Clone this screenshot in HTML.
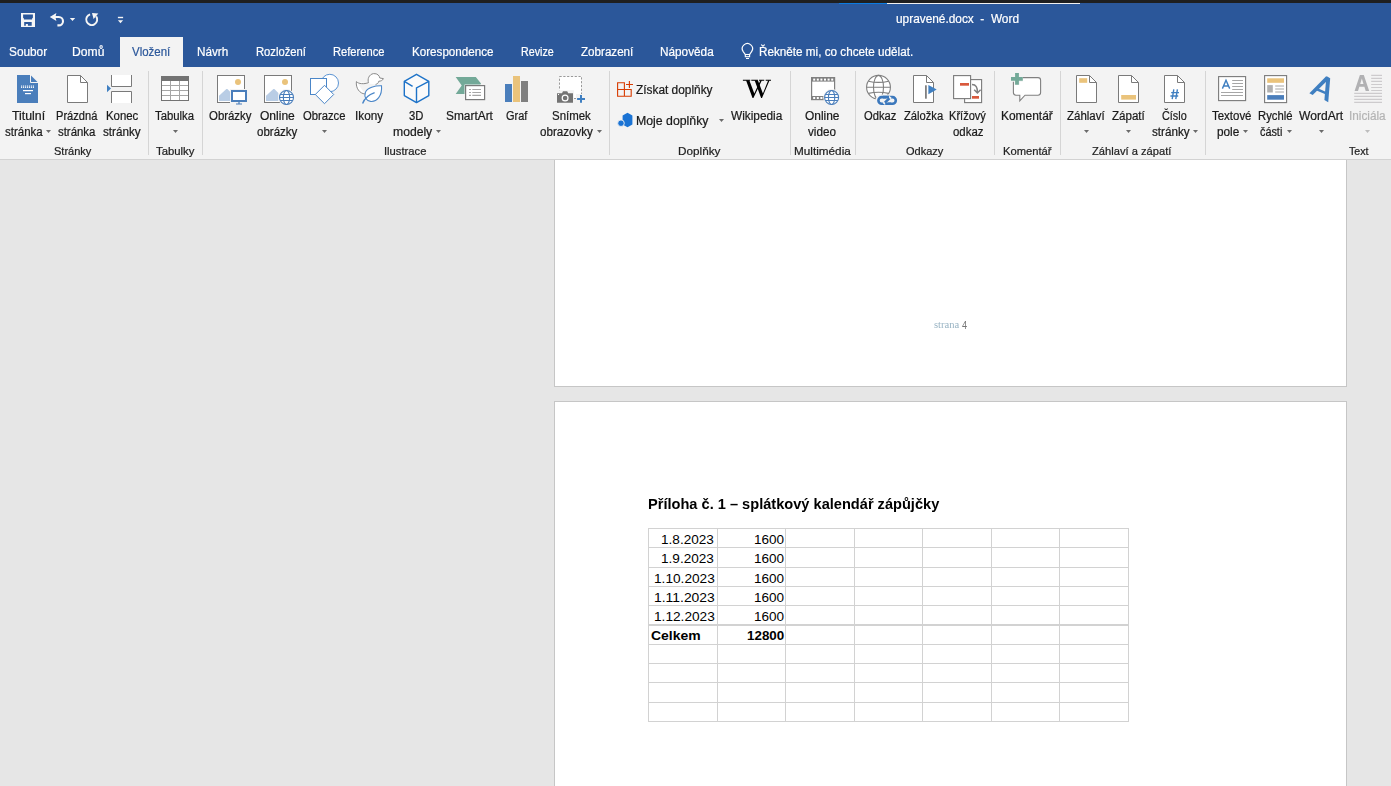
<!DOCTYPE html>
<html lang="cs"><head><meta charset="utf-8"><title>upravené.docx - Word</title>
<style>
html,body{margin:0;padding:0;}
body{width:1391px;height:786px;overflow:hidden;background:#e6e6e6;font-family:"Liberation Sans", sans-serif;position:relative}
.t{position:absolute;white-space:pre;line-height:0;transform-origin:0 50%;display:block}
.txt{position:absolute;left:0;top:0;width:100%;height:100%;will-change:transform}
#ribbon .t,#tabs .t,#titlebar .t{-webkit-text-stroke:0.22px currentColor}
#topstrip{position:absolute;left:0;top:0;width:1391px;height:3px;background:#1f1f1f}
#titlebar{position:absolute;left:0;top:0;width:1391px;height:37px;background:#2b579a}
#tabs{position:absolute;left:0;top:37px;width:1391px;height:30px;background:#2b579a}
#tab-active{position:absolute;left:120px;top:0;width:63px;height:30px;background:#f3f3f3}
#ribbon{position:absolute;left:0;top:67px;width:1391px;height:92px;background:#f3f3f3;border-bottom:1px solid #d2d2d2}
.sep{position:absolute;top:4px;width:1px;height:84px;background:#d5d5d5}
#doc{position:absolute;left:0;top:160px;width:1391px;height:626px;background:#e6e6e6;overflow:hidden}
.page{position:absolute;left:554px;width:791px;background:#fff;border:1px solid #c6c6c6}
svg{position:absolute;overflow:visible}
.arr{position:absolute;width:0;height:0;border-left:2.5px solid transparent;border-right:2.5px solid transparent;border-top:3px solid #777}
.xltxt{position:absolute;left:0;top:0;width:100%;height:100%}
</style></head>
<body>
<div id="titlebar">
<div id="topstrip"></div>
<div style="position:absolute;left:839px;top:3px;width:48px;height:1px;background:#0c7be0"></div>
<div style="position:absolute;left:887px;top:3px;width:193px;height:1px;background:#f0f0f0"></div>
<svg style="left:20px;top:12px" width="16" height="16" viewBox="20 12 16 16"><path fill-rule="evenodd" fill="#f6f6f6" d="M21,13 H35 V27 H21 Z M23.1,14.4 V17.8 L23.9,18.6 V19.6 H32.1 V18.6 L32.9,17.8 V14.4 Z M24.2,22 V25.8 H25.8 V24 H27.9 V25.8 H31.7 V22 Z"/></svg>
<svg style="left:48px;top:11px" width="18" height="17" viewBox="48 11 18 17"><path d="M56.4,12.9 L49.8,16.9 L56.4,20.9 L55.4,16.9 Z" fill="#f6f6f6"/><path d="M54,17 H58.8 A4.2,4.2 0 0 1 58.8,25.4 H57.4" fill="none" stroke="#f6f6f6" stroke-width="2.1"/></svg>
<svg style="left:69px;top:17px" width="7" height="5" viewBox="69 17 7 5"><path d="M69.8,17.9 H75.2 L72.5,21.1 Z" fill="#f6f6f6"/></svg>
<svg style="left:83px;top:11px" width="18" height="17" viewBox="83 11 18 17"><path d="M90.1,14.3 A5.5,5.5 0 1 0 96.2,16.4" fill="none" stroke="#f6f6f6" stroke-width="1.9"/><path d="M92,13 L98.3,13.4 L93.6,19 Z" fill="#f6f6f6"/></svg>
<svg style="left:116px;top:16px" width="9" height="9" viewBox="116 16 9 9"><rect x="117.9" y="16.8" width="5.2" height="1.4" fill="#f6f6f6"/><path d="M117.9,20.3 H123.1 L120.5,23.2 Z" fill="#f6f6f6"/></svg>

<div class="txt"><span class="t" style="left:896.00px;top:18.50px;font-size:13px;color:#ffffff;transform:scaleX(0.9118)">upravené.docx  -  Word</span></div>
</div>
<div id="tabs">
<div id="tab-active"></div>
<svg style="left:740px;top:5px" width="15" height="19" viewBox="740 42 15 19"><path d="M745.3,54.5 L743.2,51.6 A5.1,5.1 0 1 1 751.6,51.6 L749.6,54.5" fill="none" stroke="#fff" stroke-width="1.2"/><rect x="745.3" y="54.5" width="4.3" height="2.2" fill="none" stroke="#fff" stroke-width="1.1"/><path d="M746,58.5 H749" stroke="#fff" stroke-width="1"/></svg>

<div class="txt"><span class="t" style="left:8.50px;top:14.67px;font-size:12.5px;color:#ffffff;transform:scaleX(0.9451)">Soubor</span>
<span class="t" style="left:71.90px;top:14.67px;font-size:12.5px;color:#ffffff;transform:scaleX(0.9717)">Domů</span>
<span class="t" style="left:196.80px;top:14.67px;font-size:12.5px;color:#ffffff;transform:scaleX(0.9387)">Návrh</span>
<span class="t" style="left:256.00px;top:14.67px;font-size:12.5px;color:#ffffff;transform:scaleX(0.8994)">Rozložení</span>
<span class="t" style="left:333.00px;top:14.67px;font-size:12.5px;color:#ffffff;transform:scaleX(0.8927)">Reference</span>
<span class="t" style="left:412.00px;top:14.67px;font-size:12.5px;color:#ffffff;transform:scaleX(0.9306)">Korespondence</span>
<span class="t" style="left:520.80px;top:14.67px;font-size:12.5px;color:#ffffff;transform:scaleX(0.8556)">Revize</span>
<span class="t" style="left:580.50px;top:14.67px;font-size:12.5px;color:#ffffff;transform:scaleX(0.9293)">Zobrazení</span>
<span class="t" style="left:659.80px;top:14.67px;font-size:12.5px;color:#ffffff;transform:scaleX(0.9421)">Nápověda</span>
<span class="t" style="left:759.00px;top:14.67px;font-size:12.5px;color:#ffffff;transform:scaleX(0.9363)">Řekněte mi, co chcete udělat.</span>
<span class="t" style="left:131.60px;top:14.67px;font-size:12.5px;color:#2b579a;transform:scaleX(0.9184)">Vložení</span></div>
</div>
<div id="ribbon">
<div class="sep" style="left:148px"></div><div class="sep" style="left:202px"></div><div class="sep" style="left:609px"></div><div class="sep" style="left:790px"></div><div class="sep" style="left:855px"></div><div class="sep" style="left:994px"></div><div class="sep" style="left:1060px"></div><div class="sep" style="left:1205px"></div>
<svg style="left:16px;top:7px" width="24" height="31" viewBox="16 74 24 31"><path d="M17,75 H30.5 L38,82.5 V103 H17 Z" fill="#4a7ebb"/><path d="M30.5,75 V82.5 H38" fill="none" stroke="#f3f3f3" stroke-width="1"/><path d="M21,86 H34 M21,87.4 H34" stroke="#fff" stroke-width="1.1" stroke-dasharray="1.2 0.8" opacity=".9"/><rect x="23" y="90" width="10" height="1.2" fill="#fff"/><rect x="25" y="93" width="6" height="1.2" fill="#fff"/></svg>
<svg style="left:66px;top:7px" width="24" height="31" viewBox="66 74 24 31"><path d="M67.5,75.5 H80.5 L87.5,82.5 V102.5 H67.5 Z" fill="#fff" stroke="#7a7a7a" stroke-width="1"/><path d="M80.5,75.5 V82.5 H87.5" fill="none" stroke="#7a7a7a" stroke-width="1"/></svg>
<svg style="left:106px;top:7px" width="28" height="31" viewBox="106 74 28 31"><path d="M111.5,75 V86.5 H131.5 V75" fill="#fff" stroke="#7a7a7a"/><path d="M111.5,103 V91.5 H131.5 V103" fill="#fff" stroke="#7a7a7a"/><path d="M107,84.8 L111,88.5 L107,92.2 Z" fill="#3f7fc1"/></svg>
<svg style="left:160px;top:8px" width="30" height="28" viewBox="160 75 30 28"><rect x="161.5" y="76.5" width="27" height="24" fill="#fff" stroke="#737373"/><rect x="161" y="76" width="28" height="5" fill="#737373"/><path d="M170.5,81 V100 M179.5,81 V100 M162,85.5 H188 M162,90.5 H188 M162,95.5 H188" stroke="#a6a6a6" stroke-width="1"/></svg>
<svg style="left:216px;top:7px" width="33" height="32" viewBox="216 74 33 32"><rect x="217.5" y="75.5" width="27" height="27" fill="#fff" stroke="#7a7a7a"/><circle cx="238" cy="82" r="3" fill="#eac37b"/><path d="M219,101 V95.8 L226.4,89 H227.4 L231.4,93 V101 Z" fill="#b9cde5"/><rect x="230" y="89" width="18" height="14" fill="#f3f3f3"/><rect x="232" y="91" width="14" height="10" fill="#fff" stroke="#4a7ebb" stroke-width="2"/><path d="M236,104 H242 M239,102 V104" stroke="#4a7ebb" stroke-width="1.2"/></svg>
<svg style="left:263px;top:7px" width="33" height="32" viewBox="263 74 33 32"><rect x="264.5" y="75.5" width="27" height="27" fill="#fff" stroke="#7a7a7a"/><circle cx="285" cy="82" r="3" fill="#eac37b"/><path d="M266,101 V95.8 L273.4,89 H274.4 L278.4,93 V101 Z" fill="#b9cde5"/><circle cx="286.5" cy="97.5" r="8.4" fill="#f3f3f3"/><circle cx="286.5" cy="97.5" r="7" fill="#fff" stroke="#4a7ebb" stroke-width="1.1"/><ellipse cx="286.5" cy="97.5" rx="3.15" ry="7" fill="none" stroke="#4a7ebb" stroke-width="1.1"/><path d="M279.5,97.5 H293.5 M280.2,94.49 H292.8 M280.2,100.51 H292.8" stroke="#4a7ebb" stroke-width="1.1" fill="none"/></svg>
<svg style="left:309px;top:5px" width="32" height="33" viewBox="309 72 32 33"><circle cx="329.8" cy="83" r="8.7" fill="#fff" stroke="#5b94d3" stroke-width="1"/><rect x="310.5" y="78.5" width="16" height="16" fill="#fff" stroke="#4a86c8" stroke-width="1"/><path d="M324.5,85.3 L333.7,94.5 L324.5,103.7 L315.3,94.5 Z" fill="#fff" stroke="#4a86c8" stroke-width="1"/></svg>
<svg style="left:354px;top:5px" width="32" height="33" viewBox="354 72 32 33"><path d="M356.4,81.6 C358.5,83.8 364,84.5 368.6,82.6 C367.2,79.5 368.8,74.3 373.6,73.6 C377.5,73.2 379.6,76 379.8,78 L383.4,78.6 C382.6,80.6 380.6,81.2 378.8,81.2 C378.6,83 377.2,84 375.6,84.4 M365,94 C359.5,93.5 355.6,88 356.4,81.6" fill="#fff" stroke="#8a8a8a" stroke-width="1"/><path d="M381.5,85.8 C375,85.6 367.2,87.6 365.4,92.4 C363.8,97.2 366.4,100.8 370.6,101.4 C376.8,102 382.4,96 381.5,85.8 Z" fill="#fff" stroke="#4a86c8" stroke-width="1.1"/><path d="M362.6,103.6 C364.4,98.6 368.6,94.6 374.6,92.6" fill="none" stroke="#4a86c8" stroke-width="1.4"/></svg>
<svg style="left:402px;top:5px" width="30" height="33" viewBox="402 72 30 33"><path d="M416.5,74.3 L428.8,81.3 V95.6 L416.5,102.6 L404.3,95.6 V81.3 Z" fill="#fafafa" stroke="#1e73c8" stroke-width="1.4" stroke-linejoin="round"/><path d="M404.3,81.3 L412.6,86.3 M428.8,81.3 L416.5,88 V102.6" fill="none" stroke="#1e73c8" stroke-width="1.4"/></svg>
<svg style="left:454px;top:8px" width="33" height="27" viewBox="454 75 33 27"><path d="M455.7,77.1 H475.8 L481,83.5 L475.8,94 H455.7 L461.7,85.6 Z" fill="#73a998"/><rect x="464.5" y="84.5" width="21" height="16" fill="#f3f3f3"/><rect x="465.6" y="85.6" width="19" height="14" fill="#fff" stroke="#7a7a7a" stroke-width="1.2"/><path d="M469,89.5 H471 M472.3,89.5 H481 M469,92.5 H471 M472.3,92.5 H481 M469,95.4 H471 M472.3,95.4 H481" stroke="#a6a6a6" stroke-width="1.1"/></svg>
<svg style="left:504px;top:8px" width="26" height="28" viewBox="504 75 26 28"><rect x="505" y="84" width="7" height="18" fill="#4a7ebb"/><rect x="513" y="76" width="7" height="26" fill="#eac37b"/><rect x="521" y="81" width="7" height="21" fill="#7f7f7f"/></svg>
<svg style="left:556px;top:8px" width="30" height="29" viewBox="556 75 30 29"><rect x="559.5" y="76.5" width="22" height="22" fill="#fff" stroke="#9a9a9a" stroke-dasharray="2.2 1.6"/><rect x="576" y="94" width="10" height="10" fill="#f3f3f3"/><rect x="556" y="90.2" width="18" height="13.6" fill="#f3f3f3"/><path d="M557,93.2 H562 L563,91.3 H567.2 L568.2,93.2 H573 V102.8 H557 Z" fill="#737373"/><circle cx="565.1" cy="98" r="2.9" fill="none" stroke="#fff" stroke-width="1.2"/><rect x="558" y="94" width="1" height="1" fill="#fff"/><path d="M581,95 V102.8 M577.1,98.9 H585" stroke="#3f7fc1" stroke-width="2"/></svg>
<svg style="left:616px;top:13px" width="18" height="18" viewBox="616 80 18 18"><path d="M617.6,82.8 H624.4 V96.3 H617.6 Z M617.6,89.5 H631.2 V96.3 H624.4 V89.5" fill="none" stroke="#d83b01" stroke-width="1.1"/><path d="M629.4,81 V88 M626,84.5 H633" stroke="#d83b01" stroke-width="1.1"/></svg>
<svg style="left:617px;top:45px" width="17" height="16" viewBox="617 112 17 16"><path d="M627.5,112.8 L632.4,115.6 V124.4 L627.5,127.2 L622.6,124.4 V115.6 Z" fill="#1a73d4"/><circle cx="621" cy="123.2" r="3.3" fill="#1a73d4" stroke="#f3f3f3" stroke-width=".9"/></svg>
<svg style="left:742px;top:12px" width="30" height="20" viewBox="742 79 30 20"><path d="M746,80.3 H749.3 L754.3,93.4 L760.4,80.3 H761.9 L753.4,97.9 H752.5 Z" fill="#000"/><path d="M754.6,80.3 H757.9 L762.9,93.4 L768.2,80.3 H769.6 L762,97.9 H761.1 Z" fill="#000"/><path d="M742.9,80.2 H750.2 M751.3,80.2 H757.9 M759,80.2 H764.2 M765.7,80.2 H771" stroke="#000" stroke-width="1.1"/></svg>
<svg style="left:810px;top:9px" width="31" height="30" viewBox="810 76 31 30"><rect x="811.6" y="77.6" width="23" height="22" fill="#fff" stroke="#808080" stroke-width="1.2"/><rect x="811.6" y="77.6" width="23" height="4" fill="#808080"/><rect x="811.6" y="96" width="23" height="3.6" fill="#808080"/><rect x="813.2" y="78.6" width="2" height="2" fill="#fff"/><rect x="816.8000000000001" y="78.6" width="2" height="2" fill="#fff"/><rect x="820.4000000000001" y="78.6" width="2" height="2" fill="#fff"/><rect x="824.0" y="78.6" width="2" height="2" fill="#fff"/><rect x="827.6" y="78.6" width="2" height="2" fill="#fff"/><rect x="831.2" y="78.6" width="2" height="2" fill="#fff"/><rect x="813.2" y="97" width="2" height="2" fill="#fff"/><rect x="816.8000000000001" y="97" width="2" height="2" fill="#fff"/><rect x="820.4000000000001" y="97" width="2" height="2" fill="#fff"/><circle cx="831.6" cy="97.5" r="8.4" fill="#f3f3f3"/><circle cx="831.6" cy="97.5" r="7" fill="#fff" stroke="#4a7ebb" stroke-width="1.1"/><ellipse cx="831.6" cy="97.5" rx="3.15" ry="7" fill="none" stroke="#4a7ebb" stroke-width="1.1"/><path d="M824.6,97.5 H838.6 M825.3000000000001,94.49 H837.9 M825.3000000000001,100.51 H837.9" stroke="#4a7ebb" stroke-width="1.1" fill="none"/></svg>
<svg style="left:865px;top:7px" width="34" height="33" viewBox="865 74 34 33"><circle cx="878.5" cy="87.3" r="11.9" fill="#fff" stroke="#7f7f7f" stroke-width="1.1"/><ellipse cx="878.5" cy="87.3" rx="5" ry="11.9" fill="none" stroke="#7f7f7f" stroke-width="1.1"/><path d="M866.6,87.3 H890.4 M868.4,81.2 Q878.5,83.6 888.6,81.2 M868.4,93.4 Q878.5,91 888.6,93.4" fill="none" stroke="#7f7f7f" stroke-width="1.1"/><rect x="875.4" y="94.4" width="23.4" height="12" rx="6" fill="#f3f3f3"/><rect x="878.4" y="97.1" width="17.4" height="6.6" rx="3.3" fill="none" stroke="#3c78bc" stroke-width="2.6"/><path d="M890.2,96.6 L884,104.2" stroke="#f3f3f3" stroke-width="3.6"/><path d="M889.4,98.3 L884.9,102.6" stroke="#3c78bc" stroke-width="2.6"/><path d="M883,97.1 H889 M885.2,103.7 H891" stroke="#3c78bc" stroke-width="2.6"/></svg>
<svg style="left:912px;top:7px" width="26" height="31" viewBox="912 74 26 31"><path d="M913.5,75.5 H926.5 L933.5,82.5 V102.5 H913.5 Z" fill="#fff" stroke="#7a7a7a" stroke-width="1"/><path d="M926.5,75.5 V82.5 H933.5" fill="none" stroke="#7a7a7a" stroke-width="1"/><rect x="925" y="85.3" width="1.8" height="13.4" fill="#808080"/><path d="M928.4,85 L936.7,89.6 L928.4,94.3 Z" fill="#3f7fc1"/></svg>
<svg style="left:952px;top:7px" width="32" height="31" viewBox="952 74 32 31"><rect x="964.6" y="79.6" width="17" height="23" fill="#fff" stroke="#7a7a7a" stroke-width="1.1"/><rect x="953.6" y="75.6" width="17" height="23" fill="#fff" stroke="#7a7a7a" stroke-width="1.1"/><rect x="960" y="83" width="9" height="2.7" fill="#d9593c"/><rect x="972" y="96" width="7" height="2.7" fill="#d9593c"/><path d="M972,84.6 C976,84.6 977.6,87.5 977.4,92.6 M974.2,89.8 L977.4,93 L980.6,89.8" fill="none" stroke="#808080" stroke-width="1.5"/></svg>
<svg style="left:1009px;top:5px" width="34" height="31" viewBox="1009 72 34 31"><path d="M1016,77.6 H1038 Q1040.6,77.6 1040.6,80.2 V92.6 Q1040.6,95.2 1038,95.2 H1025 L1019.8,100.8 V95.2 H1016 Q1013.4,95.2 1013.4,92.6 V80.2 Q1013.4,77.6 1016,77.6 Z" fill="#fff" stroke="#808080" stroke-width="1.1"/><path d="M1017,73 V84.8 M1011,78.9 H1022.8" stroke="#f3f3f3" stroke-width="5.6"/><path d="M1017,73 V84.8 M1011,78.9 H1022.8" stroke="#73a998" stroke-width="3.8"/></svg>
<svg style="left:1075px;top:7px" width="24" height="31" viewBox="1075 74 24 31"><path d="M1076.5,75.5 H1089.5 L1096.5,82.5 V102.5 H1076.5 Z" fill="#fff" stroke="#7a7a7a" stroke-width="1"/><path d="M1089.5,75.5 V82.5 H1096.5" fill="none" stroke="#7a7a7a" stroke-width="1"/><rect x="1079.2" y="78.2" width="8" height="4.6" fill="#eac37b"/></svg>
<svg style="left:1117px;top:7px" width="24" height="31" viewBox="1117 74 24 31"><path d="M1118.5,75.5 H1131.5 L1138.5,82.5 V102.5 H1118.5 Z" fill="#fff" stroke="#7a7a7a" stroke-width="1"/><path d="M1131.5,75.5 V82.5 H1138.5" fill="none" stroke="#7a7a7a" stroke-width="1"/><rect x="1121.2" y="95" width="14.8" height="4.6" fill="#eac37b"/></svg>
<svg style="left:1163px;top:7px" width="24" height="31" viewBox="1163 74 24 31"><path d="M1164.5,75.5 H1177.5 L1184.5,82.5 V102.5 H1164.5 Z" fill="#fff" stroke="#7a7a7a" stroke-width="1"/><path d="M1177.5,75.5 V82.5 H1184.5" fill="none" stroke="#7a7a7a" stroke-width="1"/><path d="M1173.8,89.4 L1172.2,99.2 M1177.4,89.4 L1175.8,99.2 M1171.2,92.6 H1179 M1170.4,96 H1178.2" stroke="#3f7fc1" stroke-width="1.4"/></svg>
<svg style="left:1217px;top:8px" width="31" height="28" viewBox="1217 75 31 28"><rect x="1218.6" y="76.6" width="27" height="24" fill="#fff" stroke="#7a7a7a" stroke-width="1.1"/><path d="M1222.4,88.6 L1226,80.2 L1229.7,88.6 M1223.7,86 H1228.4" fill="none" stroke="#3f7fc1" stroke-width="1.4"/><path d="M1232.2,80.5 H1243 M1232.2,83.5 H1243 M1232.2,86.5 H1243 M1232.2,89.5 H1243 M1221,92.5 H1243 M1221,95.5 H1243" stroke="#a6a6a6" stroke-width="1"/></svg>
<svg style="left:1263px;top:7px" width="26" height="31" viewBox="1263 74 26 31"><rect x="1264.6" y="75.6" width="22" height="27" fill="#fff" stroke="#7a7a7a" stroke-width="1.1"/><rect x="1267.2" y="78.3" width="16.8" height="4.5" fill="#eac37b"/><rect x="1267.2" y="85.1" width="5.6" height="7.4" fill="#b0b0b0"/><path d="M1275.2,86 H1284 M1275.2,89 H1284 M1275.2,92 H1284" stroke="#a6a6a6" stroke-width="1"/><rect x="1267.2" y="95.1" width="16.8" height="4.6" fill="#4a7ebb"/></svg>
<svg style="left:1308px;top:8px" width="24" height="28" viewBox="1308 75 24 28"><path d="M1325.9,76.5 L1328.9,79 L1312.7,95 L1309.4,93.2 Z" fill="#3f7fc1"/><path d="M1326.4,76.1 L1330.2,78.2 L1328.2,102.2 L1324.4,100.1 Z" fill="#3f7fc1"/><path d="M1318.4,88.5 L1326.2,91.9 L1326,94.5 L1316.5,90.4 Z" fill="#3f7fc1"/></svg>
<svg style="left:1353px;top:7px" width="30" height="30" viewBox="1353 74 30 30"><path fill-rule="evenodd" fill="#b1b1b3" d="M1354.6,90.9 L1359.9,75.1 H1363.8 L1369.2,90.9 H1365.7 L1364.4,86.8 H1359.3 L1358,90.9 Z M1360.2,84 H1363.5 L1361.85,78.4 Z"/><path d="M1371.2,75.4 H1382 M1371.2,78.4 H1382 M1371.2,81.4 H1382 M1371.2,84.5 H1382 M1371.2,87.5 H1382 M1371.2,90.5 H1382 M1354.2,93.4 H1382 M1354.2,96.4 H1382 M1354.2,99.4 H1382 M1354.2,102.4 H1382 " stroke="#cdcbcd" stroke-width="1.1"/></svg>

<svg style="left:46px;top:63px" width="5" height="3" viewBox="0 0 5 3"><path d="M0,0 H5 L2.5,3 Z" fill="#6a6a6a"/></svg><svg style="left:173px;top:63px" width="5" height="3" viewBox="0 0 5 3"><path d="M0,0 H5 L2.5,3 Z" fill="#6a6a6a"/></svg><svg style="left:322px;top:63px" width="5" height="3" viewBox="0 0 5 3"><path d="M0,0 H5 L2.5,3 Z" fill="#6a6a6a"/></svg><svg style="left:436px;top:63px" width="5" height="3" viewBox="0 0 5 3"><path d="M0,0 H5 L2.5,3 Z" fill="#6a6a6a"/></svg><svg style="left:597.3px;top:63px" width="5" height="3" viewBox="0 0 5 3"><path d="M0,0 H5 L2.5,3 Z" fill="#6a6a6a"/></svg><svg style="left:719px;top:52px" width="5" height="3" viewBox="0 0 5 3"><path d="M0,0 H5 L2.5,3 Z" fill="#6a6a6a"/></svg><svg style="left:1084px;top:63px" width="5" height="3" viewBox="0 0 5 3"><path d="M0,0 H5 L2.5,3 Z" fill="#6a6a6a"/></svg><svg style="left:1126px;top:63px" width="5" height="3" viewBox="0 0 5 3"><path d="M0,0 H5 L2.5,3 Z" fill="#6a6a6a"/></svg><svg style="left:1193px;top:63px" width="5" height="3" viewBox="0 0 5 3"><path d="M0,0 H5 L2.5,3 Z" fill="#6a6a6a"/></svg><svg style="left:1243px;top:63px" width="5" height="3" viewBox="0 0 5 3"><path d="M0,0 H5 L2.5,3 Z" fill="#6a6a6a"/></svg><svg style="left:1287px;top:63px" width="5" height="3" viewBox="0 0 5 3"><path d="M0,0 H5 L2.5,3 Z" fill="#6a6a6a"/></svg><svg style="left:1319px;top:63px" width="5" height="3" viewBox="0 0 5 3"><path d="M0,0 H5 L2.5,3 Z" fill="#6a6a6a"/></svg><svg style="left:1365px;top:63px" width="5" height="3" viewBox="0 0 5 3"><path d="M0,0 H5 L2.5,3 Z" fill="#bdbdbd"/></svg>
<div class="txt"><span class="t" style="left:12.10px;top:48.84px;font-size:12px;color:#1a1a1a;transform:scaleX(1.0269)">Titulní</span>
<span class="t" style="left:4.50px;top:64.84px;font-size:12px;color:#1a1a1a;transform:scaleX(0.9578)">stránka</span>
<span class="t" style="left:56.00px;top:48.84px;font-size:12px;color:#1a1a1a;transform:scaleX(0.9239)">Prázdná</span>
<span class="t" style="left:57.70px;top:64.84px;font-size:12px;color:#1a1a1a;transform:scaleX(0.9502)">stránka</span>
<span class="t" style="left:105.90px;top:48.84px;font-size:12px;color:#1a1a1a;transform:scaleX(0.9491)">Konec</span>
<span class="t" style="left:102.70px;top:64.84px;font-size:12px;color:#1a1a1a;transform:scaleX(0.9745)">stránky</span>
<span class="t" style="left:155.20px;top:48.84px;font-size:12px;color:#1a1a1a;transform:scaleX(0.9450)">Tabulka</span>
<span class="t" style="left:208.80px;top:48.84px;font-size:12px;color:#1a1a1a;transform:scaleX(0.9510)">Obrázky</span>
<span class="t" style="left:259.90px;top:48.84px;font-size:12px;color:#1a1a1a;transform:scaleX(1.0032)">Online</span>
<span class="t" style="left:257.00px;top:64.84px;font-size:12px;color:#1a1a1a;transform:scaleX(0.9588)">obrázky</span>
<span class="t" style="left:303.00px;top:48.84px;font-size:12px;color:#1a1a1a;transform:scaleX(0.9370)">Obrazce</span>
<span class="t" style="left:355.10px;top:48.84px;font-size:12px;color:#1a1a1a;transform:scaleX(0.9795)">Ikony</span>
<span class="t" style="left:409.00px;top:48.84px;font-size:12px;color:#1a1a1a;transform:scaleX(0.9385)">3D</span>
<span class="t" style="left:393.20px;top:64.84px;font-size:12px;color:#1a1a1a;transform:scaleX(1.0132)">modely</span>
<span class="t" style="left:445.50px;top:48.84px;font-size:12px;color:#1a1a1a;transform:scaleX(0.9906)">SmartArt</span>
<span class="t" style="left:506.00px;top:48.84px;font-size:12px;color:#1a1a1a;transform:scaleX(0.9124)">Graf</span>
<span class="t" style="left:551.80px;top:48.84px;font-size:12px;color:#1a1a1a;transform:scaleX(0.9536)">Snímek</span>
<span class="t" style="left:540.30px;top:64.84px;font-size:12px;color:#1a1a1a;transform:scaleX(0.9670)">obrazovky</span>
<span class="t" style="left:635.80px;top:22.84px;font-size:12px;color:#1a1a1a;transform:scaleX(0.9887)">Získat doplňky</span>
<span class="t" style="left:636.00px;top:53.84px;font-size:12px;color:#1a1a1a;transform:scaleX(1.0252)">Moje doplňky</span>
<span class="t" style="left:730.90px;top:48.84px;font-size:12px;color:#1a1a1a;transform:scaleX(0.9859)">Wikipedia</span>
<span class="t" style="left:805.10px;top:48.84px;font-size:12px;color:#1a1a1a;transform:scaleX(0.9946)">Online</span>
<span class="t" style="left:808.00px;top:64.84px;font-size:12px;color:#1a1a1a;transform:scaleX(0.9760)">video</span>
<span class="t" style="left:864.10px;top:48.84px;font-size:12px;color:#1a1a1a;transform:scaleX(0.9312)">Odkaz</span>
<span class="t" style="left:903.50px;top:48.84px;font-size:12px;color:#1a1a1a;transform:scaleX(0.9326)">Záložka</span>
<span class="t" style="left:949.20px;top:48.84px;font-size:12px;color:#1a1a1a;transform:scaleX(0.9221)">Křížový</span>
<span class="t" style="left:953.20px;top:64.84px;font-size:12px;color:#1a1a1a;transform:scaleX(0.9522)">odkaz</span>
<span class="t" style="left:1000.90px;top:48.84px;font-size:12px;color:#1a1a1a;transform:scaleX(0.9956)">Komentář</span>
<span class="t" style="left:1066.50px;top:48.84px;font-size:12px;color:#1a1a1a;transform:scaleX(0.9553)">Záhlaví</span>
<span class="t" style="left:1111.60px;top:48.84px;font-size:12px;color:#1a1a1a;transform:scaleX(0.9638)">Zápatí</span>
<span class="t" style="left:1162.10px;top:48.84px;font-size:12px;color:#1a1a1a;transform:scaleX(0.9033)">Číslo</span>
<span class="t" style="left:1151.60px;top:64.84px;font-size:12px;color:#1a1a1a;transform:scaleX(0.9745)">stránky</span>
<span class="t" style="left:1212.10px;top:48.84px;font-size:12px;color:#1a1a1a;transform:scaleX(0.9550)">Textové</span>
<span class="t" style="left:1217.10px;top:64.84px;font-size:12px;color:#1a1a1a;transform:scaleX(0.9829)">pole</span>
<span class="t" style="left:1258.40px;top:48.84px;font-size:12px;color:#1a1a1a;transform:scaleX(0.9404)">Rychlé</span>
<span class="t" style="left:1260.20px;top:64.84px;font-size:12px;color:#1a1a1a;transform:scaleX(0.9033)">části</span>
<span class="t" style="left:1299.10px;top:48.84px;font-size:12px;color:#1a1a1a;transform:scaleX(1.0069)">WordArt</span>
<span class="t" style="left:1348.70px;top:48.84px;font-size:12px;color:#b4b4b4;transform:scaleX(0.9797)">Iniciála</span>
<span class="t" style="left:54.10px;top:84.12px;font-size:11.2px;color:#222222;transform:scaleX(0.9858)">Stránky</span>
<span class="t" style="left:155.90px;top:84.12px;font-size:11.2px;color:#222222;transform:scaleX(1.0122)">Tabulky</span>
<span class="t" style="left:383.80px;top:84.12px;font-size:11.2px;color:#222222;transform:scaleX(1.0028)">Ilustrace</span>
<span class="t" style="left:678.30px;top:84.12px;font-size:11.2px;color:#222222;transform:scaleX(1.0489)">Doplňky</span>
<span class="t" style="left:794.30px;top:84.12px;font-size:11.2px;color:#222222;transform:scaleX(1.0500)">Multimédia</span>
<span class="t" style="left:906.00px;top:84.12px;font-size:11.2px;color:#222222;transform:scaleX(0.9858)">Odkazy</span>
<span class="t" style="left:1003.10px;top:84.12px;font-size:11.2px;color:#222222;transform:scaleX(1.0017)">Komentář</span>
<span class="t" style="left:1092.30px;top:84.12px;font-size:11.2px;color:#222222;transform:scaleX(0.9974)">Záhlaví a zápatí</span>
<span class="t" style="left:1348.90px;top:84.12px;font-size:11.2px;color:#222222;transform:scaleX(0.9546)">Text</span></div>
</div>
<div id="doc">
<div class="page" style="top:-1px;height:226px"></div>
<div class="page" style="top:241px;height:400px"></div>
<div style="position:absolute;left:648px;top:368px;width:1px;height:194px;background:#d2d2d2"></div><div style="position:absolute;left:717px;top:368px;width:1px;height:194px;background:#d2d2d2"></div><div style="position:absolute;left:785px;top:368px;width:1px;height:194px;background:#d2d2d2"></div><div style="position:absolute;left:854px;top:368px;width:1px;height:194px;background:#d2d2d2"></div><div style="position:absolute;left:922px;top:368px;width:1px;height:194px;background:#d2d2d2"></div><div style="position:absolute;left:991px;top:368px;width:1px;height:194px;background:#d2d2d2"></div><div style="position:absolute;left:1059px;top:368px;width:1px;height:194px;background:#d2d2d2"></div><div style="position:absolute;left:1128px;top:368px;width:1px;height:194px;background:#d2d2d2"></div><div style="position:absolute;left:648px;top:368px;width:481px;height:1px;background:#d2d2d2"></div><div style="position:absolute;left:648px;top:387px;width:481px;height:1px;background:#d2d2d2"></div><div style="position:absolute;left:648px;top:407px;width:481px;height:1px;background:#d2d2d2"></div><div style="position:absolute;left:648px;top:426px;width:481px;height:1px;background:#d2d2d2"></div><div style="position:absolute;left:648px;top:445px;width:481px;height:1px;background:#d2d2d2"></div><div style="position:absolute;left:648px;top:464px;width:481px;height:2px;background:#d2d2d2"></div><div style="position:absolute;left:648px;top:484px;width:481px;height:1px;background:#d2d2d2"></div><div style="position:absolute;left:648px;top:503px;width:481px;height:1px;background:#d2d2d2"></div><div style="position:absolute;left:648px;top:522px;width:481px;height:1px;background:#d2d2d2"></div><div style="position:absolute;left:648px;top:542px;width:481px;height:1px;background:#d2d2d2"></div><div style="position:absolute;left:648px;top:561px;width:481px;height:1px;background:#d2d2d2"></div>
<div class="xltxt"><span class="t" style="left:661.40px;top:379.60px;font-size:13px;color:#000000;transform:scaleX(1.0453)">1.8.2023</span>
<span class="t" style="left:753.70px;top:379.60px;font-size:13px;color:#000000;transform:scaleX(1.0407)">1600</span>
<span class="t" style="left:661.40px;top:398.60px;font-size:13px;color:#000000;transform:scaleX(1.0453)">1.9.2023</span>
<span class="t" style="left:753.70px;top:398.60px;font-size:13px;color:#000000;transform:scaleX(1.0407)">1600</span>
<span class="t" style="left:653.50px;top:418.60px;font-size:13px;color:#000000;transform:scaleX(1.0511)">1.10.2023</span>
<span class="t" style="left:753.70px;top:418.60px;font-size:13px;color:#000000;transform:scaleX(1.0407)">1600</span>
<span class="t" style="left:653.50px;top:437.60px;font-size:13px;color:#000000;transform:scaleX(1.0690)">1.11.2023</span>
<span class="t" style="left:753.70px;top:437.60px;font-size:13px;color:#000000;transform:scaleX(1.0407)">1600</span>
<span class="t" style="left:653.50px;top:456.60px;font-size:13px;color:#000000;transform:scaleX(1.0511)">1.12.2023</span>
<span class="t" style="left:753.70px;top:456.60px;font-size:13px;color:#000000;transform:scaleX(1.0407)">1600</span>
<span class="t" style="left:651.10px;top:475.90px;font-size:13px;font-weight:700;color:#000000;transform:scaleX(1.0746)">Celkem</span>
<span class="t" style="left:746.60px;top:475.90px;font-size:13px;font-weight:700;color:#000000;transform:scaleX(1.0289)">12800</span></div>
<div class="txt"><span class="t" style="left:934.40px;top:165.46px;font-size:10.5px;font-family:'Liberation Serif',serif;color:#98b3c3;transform:scaleX(1.0049)">strana</span>
<span class="t" style="left:962.30px;top:165.19px;font-size:11px;color:#757575;transform:scaleX(0.8327)">4</span>
<span class="t" style="left:648.00px;top:344.00px;font-size:15px;font-weight:700;color:#000000;transform:scaleX(0.9732)">Příloha č. 1 – splátkový kalendář zápůjčky</span></div>
</div>
</body></html>
